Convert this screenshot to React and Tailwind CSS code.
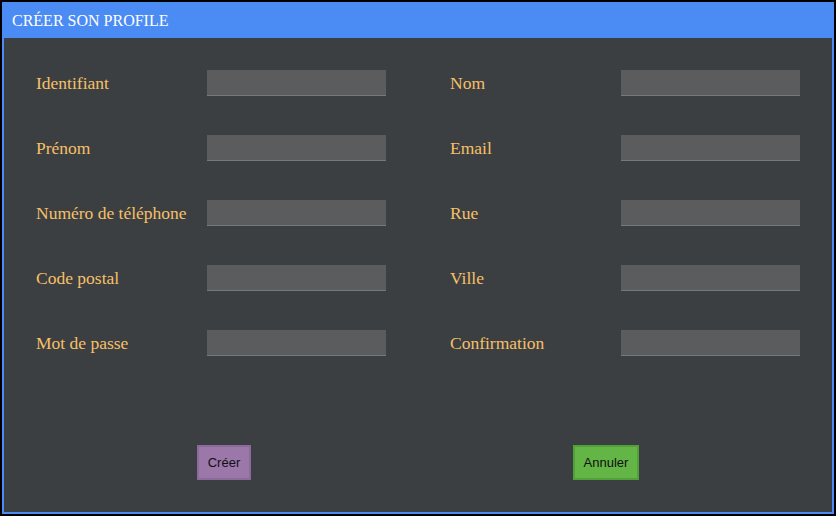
import React from 'react'

const fields = [
  ['Identifiant', 'Nom'],
  ['Prénom', 'Email'],
  ['Numéro de téléphone', 'Rue'],
  ['Code postal', 'Ville'],
  ['Mot de passe', 'Confirmation'],
]

function Field({ label, type }) {
  return (
    <div className="flex items-center">
      <span className="w-[171px] shrink-0 pt-[2px] font-['Liberation_Serif','Times_New_Roman',serif] text-[17.5px] leading-none text-[#f7c067] whitespace-nowrap">
        {label}
      </span>
      <input
        type={type}
        className="w-[179px] h-[26px] bg-[#5b5c5d] border-0 border-b border-[#777879] outline-none text-white px-1"
      />
    </div>
  )
}

export default function App() {
  return (
    <div className="w-[836px] h-[516px] border-2 border-black bg-black">
      <div className="h-full flex flex-col border-2 border-[#4b8bf4] bg-[#3b3f42] font-['Liberation_Serif','Times_New_Roman',serif]">
        {/* Header */}
        <div className="h-[34px] shrink-0 bg-[#4b8bf4] flex items-center pl-2 text-white text-base">
          CRÉER SON PROFILE
        </div>

        {/* Form */}
        <div className="px-8 pt-8 grid grid-cols-[350px_350px] gap-x-[64px] gap-y-[39px]">
          {fields.map(([left, right]) => (
            <React.Fragment key={left}>
              <Field label={left} type={left === 'Mot de passe' ? 'password' : 'text'} />
              <Field label={right} type={right === 'Confirmation' ? 'password' : 'text'} />
            </React.Fragment>
          ))}
        </div>

        {/* Actions */}
        <div className="flex items-start mt-[89px] pl-[193px] font-['Liberation_Sans',Arial,sans-serif]">
          <button className="w-[54px] h-[35px] bg-[#9b77aa] border-2 border-[#8c6a9b] text-[13px] text-[#111]">
            Créer
          </button>
          <button className="ml-[322px] w-[66px] h-[35px] bg-[#63b546] border-2 border-[#52a03a] text-[13px] text-[#111]">
            Annuler
          </button>
        </div>
      </div>
    </div>
  )
}
